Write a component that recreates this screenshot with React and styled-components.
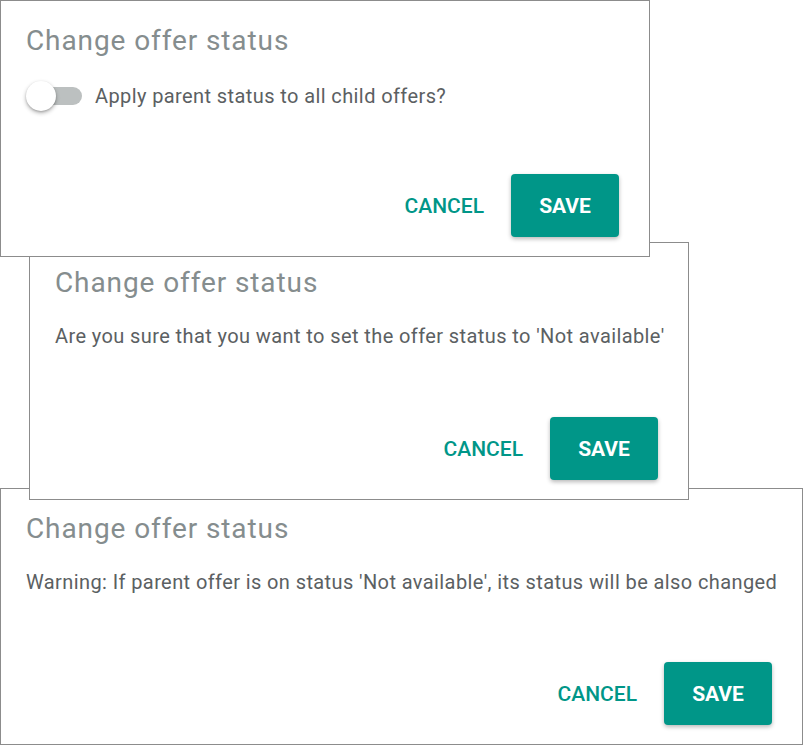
import React from "react";
import styled, { createGlobalStyle } from "styled-components";

const Global = createGlobalStyle`
  html, body { margin: 0; padding: 0; background: #ffffff; }
  body { font-family: Roboto, "Liberation Sans", Arial, sans-serif; }
  * { box-sizing: border-box; }
`;

const Stack = styled.div`
  display: flex;
  flex-direction: column;
  align-items: flex-start;
  width: 803px;
`;

const Dialog = styled.section`
  position: relative;
  z-index: ${(p) => p.$z};
  width: ${(p) => p.$w}px;
  height: ${(p) => p.$h}px;
  margin-left: ${(p) => p.$left || 0}px;
  margin-top: ${(p) => p.$top || 0}px;
  background: #ffffff;
  border: 1px solid #8c8c8c;
  display: flex;
  flex-direction: column;
  padding: 24px 30px 19px 25px;
`;

const Title = styled.h2`
  margin: 0;
  font-family: Roboto, "Liberation Sans", Arial, sans-serif;
  font-weight: 400;
  font-size: 28px;
  letter-spacing: 0.9px;
  line-height: 32px;
  color: #858d8e;
`;

const Body = styled.div`
  margin-top: 25px;
  display: flex;
  align-items: center;
  gap: 13px;
  font-size: 20px;
  letter-spacing: 0.4px;
  line-height: 24px;
  white-space: nowrap;
  color: #5b6062;
`;

const SwitchTrack = styled.span`
  position: relative;
  flex: none;
  width: 55px;
  height: 18px;
  margin: 5px 0 5px 1px;
  border-radius: 9px;
  background: #bcc0c0;
`;

const SwitchThumb = styled.span`
  position: absolute;
  left: -1px;
  top: 50%;
  width: 30px;
  height: 30px;
  margin-top: -15px;
  border-radius: 50%;
  background: #ffffff;
  box-shadow: 0 2px 4px rgba(0, 0, 0, 0.3), 0 1px 2px rgba(0, 0, 0, 0.15);
`;

const Actions = styled.div`
  margin-top: auto;
  display: flex;
  justify-content: flex-end;
  align-items: center;
  gap: 27px;
`;

const TextButton = styled.button`
  border: none;
  background: transparent;
  padding: 0;
  font-family: Roboto, "Liberation Sans", Arial, sans-serif;
  font-weight: 500;
  font-size: 21px;
  color: #009688;
  cursor: pointer;
`;

const PrimaryButton = styled.button`
  width: 108px;
  height: 63px;
  border: none;
  border-radius: 4px;
  background: #009688;
  color: #ffffff;
  font-family: Roboto, "Liberation Sans", Arial, sans-serif;
  font-weight: 700;
  font-size: 21px;
  box-shadow: 0 2px 4px rgba(0, 0, 0, 0.28);
  cursor: pointer;
`;

const dialogs = [
  { w: 650, h: 257, left: 0, top: 0, z: 3, toggle: true, text: "Apply parent status to all child offers?" },
  { w: 660, h: 258, left: 29, top: -15, z: 2, text: "Are you sure that you want to set the offer status to 'Not available'" },
  { w: 803, h: 257, left: 0, top: -12, z: 1, text: "Warning: If parent offer is on status 'Not available', its status will be also changed" },
];

export default function App() {
  return (
    <>
      <Global />
      <Stack>
        {dialogs.map((d, i) => (
          <Dialog key={i} $w={d.w} $h={d.h} $left={d.left} $top={d.top} $z={d.z}>
            <Title>Change offer status</Title>
            <Body>
              {d.toggle && (
                <SwitchTrack>
                  <SwitchThumb />
                </SwitchTrack>
              )}
              <span>{d.text}</span>
            </Body>
            <Actions>
              <TextButton>CANCEL</TextButton>
              <PrimaryButton>SAVE</PrimaryButton>
            </Actions>
          </Dialog>
        ))}
      </Stack>
    </>
  );
}
